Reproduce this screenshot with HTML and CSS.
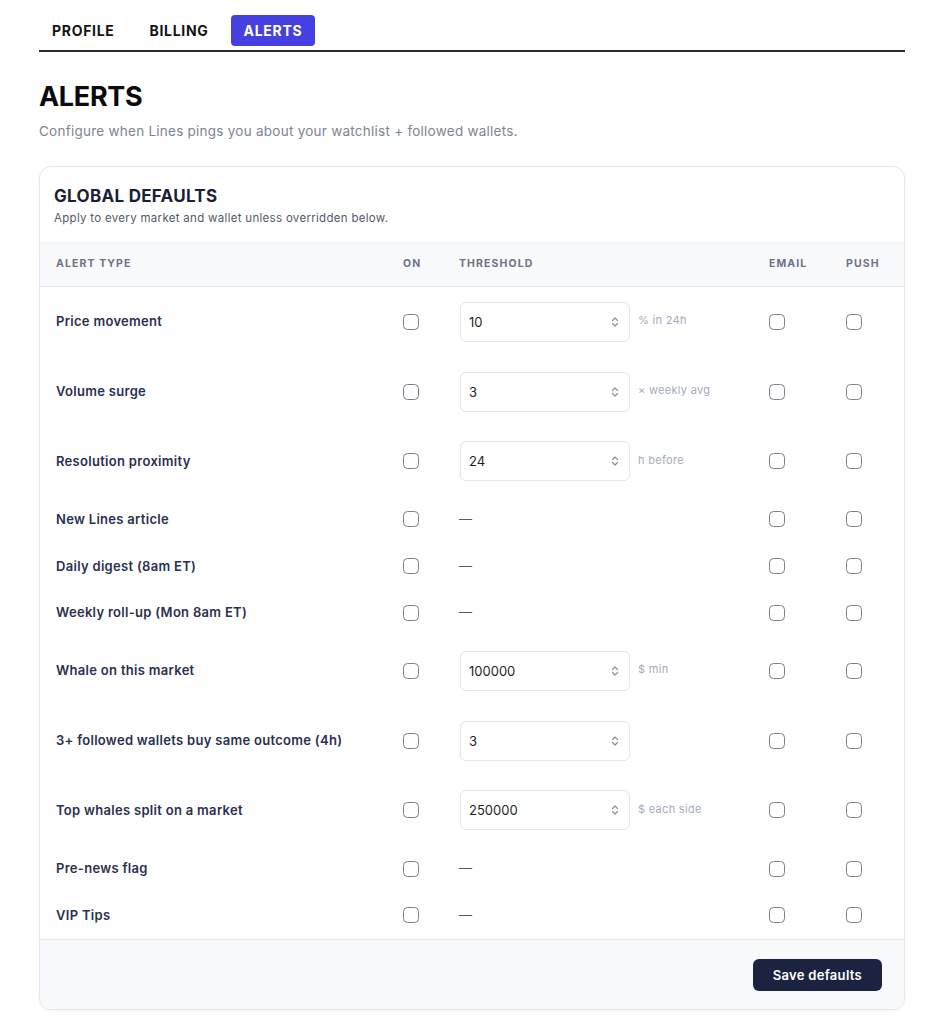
FILE: index.html
```html
<!DOCTYPE html>
<html lang="en">

<head>
    <meta charset="UTF-8">
    <meta name="viewport" content="width=device-width, initial-scale=1.0">
    <title>Settings - Alerts</title>
    <link rel="stylesheet" href="styles.css">
</head>

<body>
    <div class="page">
        <nav class="tabs">
            <a class="tab">PROFILE</a>
            <a class="tab">BILLING</a>
            <a class="tab active">ALERTS</a>
        </nav>

        <h1 class="title">ALERTS</h1>
        <p class="subtitle">Configure when Lines pings you about your watchlist + followed wallets.</p>

        <div class="card">
            <div class="card-head">
                <h2>GLOBAL DEFAULTS</h2>
                <p>Apply to every market and wallet unless overridden below.</p>
            </div>

            <table class="alerts">
                <colgroup>
                    <col class="c-type">
                    <col class="c-on">
                    <col class="c-thr">
                    <col class="c-email">
                    <col class="c-push">
                </colgroup>
                <thead>
                    <tr>
                        <th>Alert type</th>
                        <th>On</th>
                        <th>Threshold</th>
                        <th>Email</th>
                        <th>Push</th>
                    </tr>
                </thead>
                <tbody id="alertRows">
                    <!-- rows rendered below -->
                </tbody>
            </table>

            <div class="card-foot">
                <button class="save-button">Save defaults</button>
            </div>
        </div>
    </div>

    <script>
        const alertTypes = [
            { name: 'Price movement', value: '10', unit: '% in 24h' },
            { name: 'Volume surge', value: '3', unit: '× weekly avg' },
            { name: 'Resolution proximity', value: '24', unit: 'h before' },
            { name: 'New Lines article' },
            { name: 'Daily digest (8am ET)' },
            { name: 'Weekly roll-up (Mon 8am ET)' },
            { name: 'Whale on this market', value: '100000', unit: '$ min' },
            { name: '3+ followed wallets buy same outcome (4h)', value: '3', unit: '' },
            { name: 'Top whales split on a market', value: '250000', unit: '$ each side' },
            { name: 'Pre-news flag' },
            { name: 'VIP Tips' }
        ];

        const stepper = `<svg class="stepper" width="10" height="14" viewBox="0 0 10 14"><path d="M2.5 5.5 L5 3 L7.5 5.5 M2.5 8.5 L5 11 L7.5 8.5" fill="none" stroke="#8b909a" stroke-width="1.2" stroke-linecap="round" stroke-linejoin="round"/></svg>`;

        function renderRows() {
            const body = document.getElementById('alertRows');
            body.innerHTML = '';

            alertTypes.forEach((alert) => {
                const row = body.insertRow();
                row.insertCell(0).innerHTML = `<span class="alert-name">${alert.name}</span>`;
                row.insertCell(1).innerHTML = '<input type="checkbox" class="check">';

                const thr = row.insertCell(2);
                if (alert.value !== undefined) {
                    thr.innerHTML = `
                        <div class="threshold">
                            <div class="num-box"><input type="text" class="num" value="${alert.value}">${stepper}</div>
                            <span class="unit">${alert.unit}</span>
                        </div>`;
                } else {
                    thr.innerHTML = '<span class="dash">—</span>';
                }

                row.insertCell(3).innerHTML = '<input type="checkbox" class="check">';
                row.insertCell(4).innerHTML = '<input type="checkbox" class="check">';
            });
        }

        renderRows();
    </script>
</body>
</html>
```

FILE: styles.css
```css
html, body {
    margin: 0;
    background: #ffffff;
    font-family: Inter, "Noto Sans", Arial, sans-serif;
    color: #1b2034;
}

.page {
    padding: 15px 30px 20px 39px;
}

.tabs {
    display: flex;
    gap: 9px;
    padding-bottom: 4px;
    border-bottom: 2px solid #2b2d33;
}

.tab {
    display: block;
    height: 31px;
    line-height: 31px;
    padding: 0 13px;
    border-radius: 4px;
    font-size: 14px;
    font-weight: 700;
    letter-spacing: 0.7px;
    color: #141414;
    cursor: pointer;
}

.tab.active {
    background-color: #4740e0;
    color: #ffffff;
}

.title {
    margin: 28px 0 0;
    font-size: 27px;
    line-height: 34px;
    font-weight: 700;
    letter-spacing: -0.3px;
    color: #0b0b0d;
}

.subtitle {
    margin: 8px 0 0;
    font-size: 13.5px;
    line-height: 18px;
    letter-spacing: 0.25px;
    color: #7d8497;
}

.card {
    margin-top: 26px;
    border: 1px solid #e4e6ec;
    border-radius: 12px;
    overflow: hidden;
    box-shadow: 0 1px 3px rgba(20, 25, 45, 0.05);
}

.card-head {
    padding: 18px 14px 15px;
}

.card-head h2 {
    margin: 0;
    font-size: 17px;
    line-height: 22px;
    font-weight: 700;
    letter-spacing: 0.3px;
    color: #1a1f36;
}

.card-head p {
    margin: 4px 0 0;
    font-size: 11.5px;
    line-height: 15px;
    letter-spacing: 0.3px;
    color: #535a6b;
}

.alerts {
    width: 100%;
    border-collapse: collapse;
    table-layout: fixed;
}

.c-type { width: 347px; }
.c-on { width: 56px; }
.c-thr { width: 310px; }
.c-email { width: 77px; }
.c-push { width: 74px; }

.alerts th {
    height: 45px;
    padding: 0 16px;
    background-color: #f8f9fb;
    border-bottom: 1px solid #e8eaef;
    text-align: left;
    font-size: 10.5px;
    font-weight: 700;
    letter-spacing: 1.1px;
    text-transform: uppercase;
    color: #6c7385;
}

.alerts td {
    padding: 14.85px 16px;
    vertical-align: middle;
    font-size: 13px;
    line-height: 17px;
}

.alert-name {
    font-weight: 600;
    letter-spacing: 0.3px;
    color: #2a3050;
}

.check {
    appearance: none;
    -webkit-appearance: none;
    display: block;
    width: 16px;
    height: 16px;
    margin: 0;
    border: 1.2px solid #7b808a;
    border-radius: 4.5px;
    background: #ffffff;
}

.threshold {
    display: flex;
    align-items: center;
    gap: 8px;
}

.num-box {
    display: flex;
    align-items: center;
    width: 168px;
    height: 38px;
    margin-left: 1px;
    border: 1px solid #e4e6ec;
    border-radius: 6px;
    background: #ffffff;
}

.num {
    flex: 1;
    min-width: 0;
    border: none;
    outline: none;
    padding: 0 0 0 8px;
    background: transparent;
    font-family: inherit;
    font-size: 13px;
    color: #1e1f24;
}

.stepper {
    margin-right: 9px;
}

.unit {
    margin-top: -2px;
    font-size: 11px;
    letter-spacing: 0.3px;
    color: #a4abbb;
}

.dash {
    display: block;
    color: #555a66;
}

.card-foot {
    display: flex;
    justify-content: flex-end;
    padding: 19px 22px 18px;
    background-color: #f8f9fb;
    border-top: 1px solid #e8eaef;
}

.save-button {
    height: 32px;
    padding: 0 20px;
    border: none;
    border-radius: 6px;
    background-color: #1c2341;
    color: #ffffff;
    font-family: inherit;
    font-size: 13px;
    font-weight: 600;
    letter-spacing: 0.3px;
    cursor: pointer;
}
```
